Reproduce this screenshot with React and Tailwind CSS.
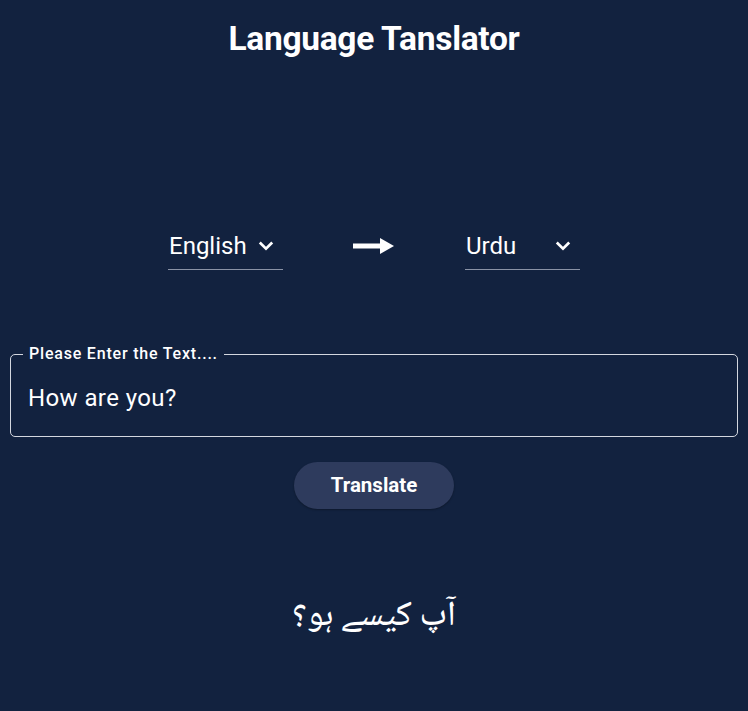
const Chevron = () => (
  <svg width="18" height="18" viewBox="0 0 24 24" fill="none">
    <polyline points="5,8.5 12,15.5 19,8.5" stroke="white" strokeWidth="3.6" strokeLinecap="square" />
  </svg>
);

const Arrow = () => (
  <svg width="42" height="20" viewBox="0 0 42 20" className="mb-[13px]">
    <rect x="0" y="7.5" width="30" height="5" fill="white" />
    <polygon points="27,2 41,10 27,18" fill="white" />
  </svg>
);

const LangDropdown = ({ label }) => (
  <div className="w-[115px] flex items-center justify-between pl-[1px] pr-2 pb-[11px] border-b border-[#8a93a6]">
    <span className="text-[24px] text-white leading-none">{label}</span>
    <Chevron />
  </div>
);

export default function App() {
  return (
    <div
      className="min-h-[711px] w-full bg-[#12223f] flex flex-col items-center"
      style={{ fontFamily: "Roboto, 'Noto Sans', sans-serif" }}
    >
      <h1 className="mt-[19px] text-[33.5px] font-bold text-white leading-[40px] tracking-[-0.3px]">
        Language Tanslator
      </h1>

      <div className="mt-[175px] flex items-center gap-[70px]">
        <LangDropdown label="English" />
        <Arrow />
        <LangDropdown label="Urdu" />
      </div>

      <fieldset className="mt-[76px] w-[728px] h-[91px] border-[1.5px] border-[#d3d7df] rounded-[5px] px-[12px]">
        <legend className="px-[6px] text-[16px] font-medium text-white leading-none tracking-[0.8px]">
          Please Enter the Text....
        </legend>
        <div className="pl-[5px] pt-[24px] text-[24px] text-white leading-none tracking-[0.4px]">
          How are you?
        </div>
      </fieldset>

      <button className="mt-[25px] w-[160px] h-[47px] rounded-full bg-[#2e3b5d] text-white text-[20.5px] font-bold shadow-[0_1px_2px_rgba(0,0,0,0.3)]">
        Translate
      </button>

      <div
        dir="rtl"
        className="mt-[91px] text-[35px] font-medium text-white leading-none"
        style={{ fontFamily: "'Noto Naskh Arabic', 'Noto Sans Arabic', 'DejaVu Sans', sans-serif" }}
      >
        آپ کیسے ہو؟
      </div>
    </div>
  );
}
